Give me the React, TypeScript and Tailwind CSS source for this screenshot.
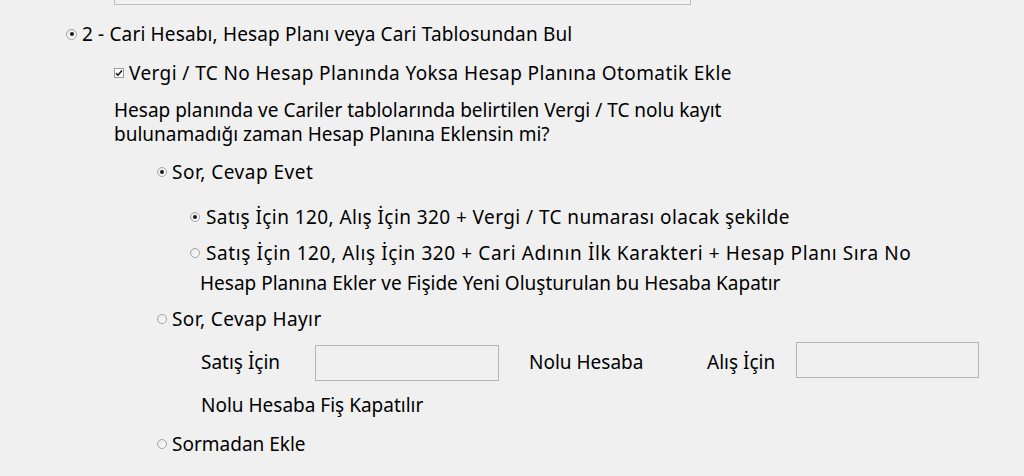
import React from "react";

const font = { fontFamily: '"Noto Sans", "Open Sans", sans-serif' };

function Radio({ checked, size = 10 }: { checked?: boolean; size?: number }) {
  return (
    <span
      className={
        (size === 11 ? "w-[11px] h-[11px]" : "w-[10px] h-[10px]") +
        " shrink-0 rounded-full border border-[#a3a3a3] bg-gradient-to-br from-[#e6e6e6] to-white flex items-center justify-center"
      }
    >
      {checked && <span className="w-[4px] h-[4px] rounded-full bg-[#1a1a1a]" />}
    </span>
  );
}

function Checkbox() {
  return (
    <span className="w-[10px] h-[10px] shrink-0 border border-[#9c9c9c] bg-white flex items-center justify-center">
      <svg width="8" height="8" viewBox="0 0 8 8">
        <path d="M1 4.2 L3 6.2 L7 1.6" stroke="#111" strokeWidth="1.6" fill="none" />
      </svg>
    </span>
  );
}

export default function App() {
  return (
    <div
      className="w-[1024px] h-[476px] bg-[#f0f0f0] text-black text-[19px] leading-[23px] overflow-hidden flex flex-col whitespace-nowrap"
      style={font}
    >
      <div className="ml-[114px] w-[577px] h-[5px] border-l border-r border-b border-[#bdbdbd] bg-[#f2f2f2]" />

      {/* Row 1 */}
      <div className="mt-[17px] h-[24px] flex items-center ml-[66px] gap-[5px]">
        <Radio checked size={11} />
        <span className="tracking-[0.15px]">2 - Cari Hesabı, Hesap Planı veya Cari Tablosundan Bul</span>
      </div>

      {/* Checkbox */}
      <div className="mt-[15px] h-[24px] flex items-center ml-[114px] gap-[5px]">
        <Checkbox />
        <span className="tracking-[0.4px]">Vergi / TC No Hesap Planında Yoksa Hesap Planına Otomatik Ekle</span>
      </div>

      {/* Paragraph */}
      <div className="mt-[13px] ml-[114px] leading-[24px]">
        <div>Hesap planında ve Cariler tablolarında belirtilen Vergi / TC nolu kayıt</div>
        <div>bulunamadığı zaman Hesap Planına Eklensin mi?</div>
      </div>

      {/* Sor, Cevap Evet */}
      <div className="mt-[14px] h-[24px] flex items-center ml-[157px] gap-[5px]">
        <Radio checked />
        <span className="tracking-[0.5px]">Sor, Cevap Evet</span>
      </div>

      <div className="mt-[21px] h-[24px] flex items-center ml-[190px] gap-[6px]">
        <Radio checked />
        <span className="tracking-[0.42px]">Satış İçin 120, Alış İçin 320 + Vergi / TC numarası olacak şekilde</span>
      </div>

      <div className="mt-[12px] h-[24px] flex items-center ml-[190px] gap-[6px]">
        <Radio />
        <span className="tracking-[0.6px]">Satış İçin 120, Alış İçin 320 + Cari Adının İlk Karakteri + Hesap Planı Sıra No</span>
      </div>

      <div className="mt-[6px] h-[24px] flex items-center ml-[200px]">
        <span>Hesap Planına Ekler ve Fişide Yeni Oluşturulan bu Hesaba Kapatır</span>
      </div>

      {/* Sor, Cevap Hayır */}
      <div className="mt-[12px] h-[24px] flex items-center ml-[157px] gap-[5px]">
        <Radio />
        <span className="tracking-[0.4px]">Sor, Cevap Hayır</span>
      </div>

      <div className="mt-[11px] h-[39px] flex ml-[201px]">
        <span className="w-[114px] self-center mt-[1px]">Satış İçin</span>
        <div className="w-[184px] h-[36px] mt-[3px] border border-[#b5b5b5] bg-[#f0f0f0]" />
        <span className="ml-[30px] w-[178px] self-center mt-[1px]">Nolu Hesaba</span>
        <span className="w-[89px] self-center mt-[1px]">Alış İçin</span>
        <div className="w-[183px] h-[36px] border border-[#b5b5b5] bg-[#f0f0f0]" />
      </div>

      <div className="mt-[12px] h-[24px] flex items-center ml-[201px]">
        <span>Nolu Hesaba Fiş Kapatılır</span>
      </div>

      <div className="mt-[15px] h-[24px] flex items-center ml-[157px] gap-[5px]">
        <Radio />
        <span>Sormadan Ekle</span>
      </div>
    </div>
  );
}
